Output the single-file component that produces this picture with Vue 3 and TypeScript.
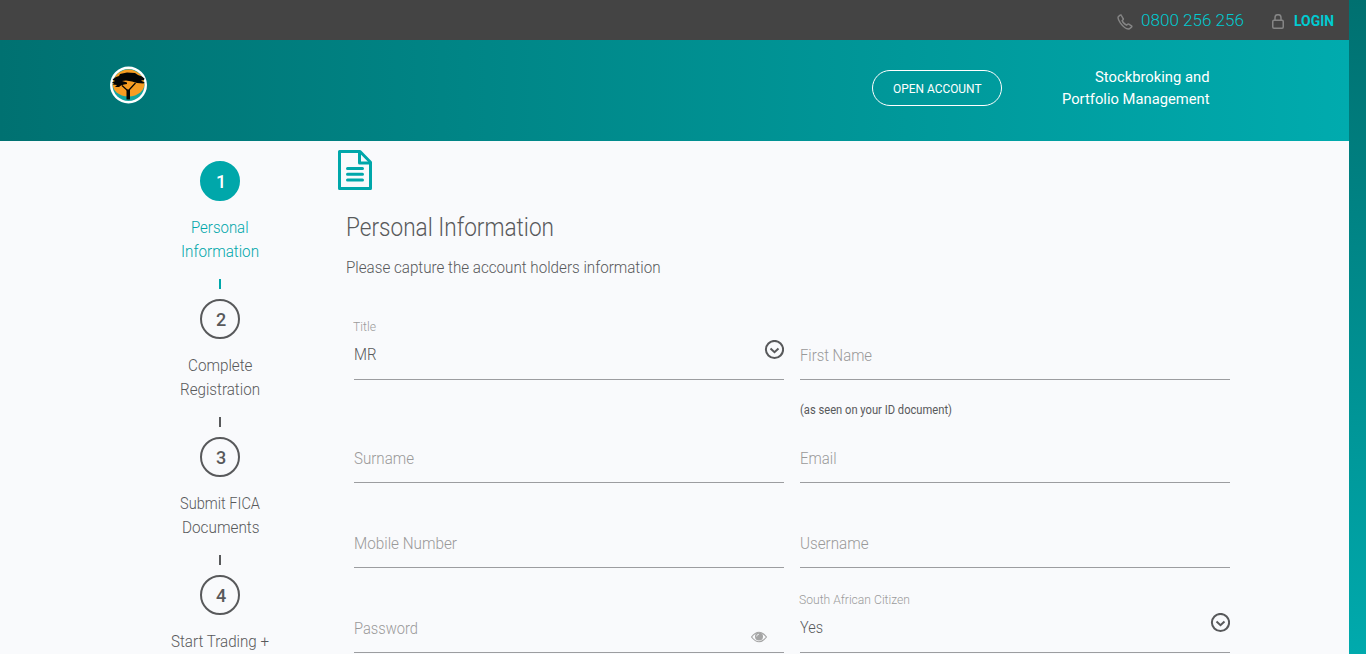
<script setup lang="ts">
import type { Directive } from 'vue'

interface Step {
  id: number
  lines: { text: string; width: number }[]
}

const steps: Step[] = [
  { id: 1, lines: [{ text: 'Personal', width: 57.5 }, { text: 'Information', width: 78 }] },
  { id: 2, lines: [{ text: 'Complete', width: 64.5 }, { text: 'Registration', width: 80 }] },
  { id: 3, lines: [{ text: 'Submit FICA', width: 80 }, { text: 'Documents', width: 77.5 }] },
  { id: 4, lines: [{ text: 'Start Trading +', width: 98 }] },
]

interface Field {
  name: string
  width: number
  value?: string
  valueWidth?: number
  hint?: string
  reveal?: boolean
}

const fields: Field[] = [
  { name: 'Title', width: 23, value: 'MR', valueWidth: 22.5 },
  { name: 'First Name', width: 72, hint: '(as seen on your ID document)' },
  { name: 'Surname', width: 60 },
  { name: 'Email', width: 36.5 },
  { name: 'Mobile Number', width: 103 },
  { name: 'Username', width: 68.5 },
  { name: 'Password', width: 64, reveal: true },
  { name: 'South African Citizen', width: 111, value: 'Yes', valueWidth: 23 },
]

// Condenses a label's glyphs so that it fills the given width in pixels.
const vFit: Directive<HTMLElement, number> = {
  mounted(el, { value }) {
    const natural = el.getBoundingClientRect().width
    el.style.transform = `scaleX(${(value / natural).toFixed(4)})`
    el.style.marginRight = `${(value - natural).toFixed(2)}px`
  },
}
</script>

<template>
  <div class="page">
    <div class="content">
      <div class="topbar">
        <svg class="phone" viewBox="0 0 16 16">
          <path d="M3.2 1.1 1.5 2.5C.6 3.4 1 5.500 3.500 9.100 6.400 13 10.200 15.400 12.400 14.800L14.500 13.200C15 12.700 15 12.300 14.500 11.900L11.800 10.100C11.300 9.800 10.900 9.900 10.500 10.300L9.600 11.100C8.200 10.800 5.700 8.200 5.200 6.700L6 5.800C6.400 5.400 6.400 5 6.100 4.500L4.400 1.500C4.100.9 3.700.8 3.200 1.100Z" />
        </svg>
        <span class="tel"><span v-fit="103">0800 256 256</span></span>
        <svg class="lock" viewBox="0 0 12 15">
          <rect x=".75" y="6.25" width="10.500" height="8" rx="1.200" />
          <path d="M3 6V3.700a3 3 0 0 1 6 0V6" />
        </svg>
        <span class="login"><span v-fit="40">LOGIN</span></span>
      </div>

      <header class="header">
        <svg class="logo" viewBox="0 0 38 38">
          <circle cx="18.500" cy="19" r="18.500" fill="#fff" />
          <circle cx="18.500" cy="19" r="16" fill="#12a3a0" />
          <path d="M2.700 17A16 16 0 0 1 34.300 17C35.500 24 28 30.500 18.500 30.500S1.500 24 2.700 17Z" fill="#f79c22" />
          <path d="M2.500 13.500 6 11 9 10 10 8 17 6.500 25 7 28 9 32 10.500 34.500 12.500 34 14 31 14.500 34.500 16.500 33.500 17.500 27 17 22 15.500 16 14.500 12 15 17 16.500 17 18 14 18.500 11 19.500 9 21 5 21 7 19 2.500 18.500 4 17.500 2 16.500 5 15Z" fill="#050505" />
          <path d="M12 19.500 17.500 24.500M25.500 17 19 24" fill="none" stroke="#050505" stroke-width="1.200" />
          <path d="M16.500 23.500H20V33.500H16.500Z" fill="#050505" />
        </svg>
        <button class="open"><span v-fit="88.5">OPEN ACCOUNT</span></button>
        <div class="tagline">
          <div><span v-fit="114.5">Stockbroking and</span></div>
          <div><span v-fit="147.5">Portfolio Management</span></div>
        </div>
      </header>

      <div class="body">
        <nav class="steps">
          <div v-for="s in steps" :key="s.id" class="step" :class="{ active: s.id === 1 }">
            <div class="num">{{ s.id }}</div>
            <div class="step-label">
              <div v-for="l in s.lines" :key="l.text"><span v-fit="l.width">{{ l.text }}</span></div>
            </div>
            <div class="tick"></div>
          </div>
        </nav>

        <main class="main">
          <svg class="doc" viewBox="0 0 34 40">
            <path d="M1.500 1.500H22L32.500 12.200V38.500H1.500Z" />
            <path d="M21.500 1.500V13H32.500" />
            <path d="M9.500 18.500H24.500M9.500 24.300H24.500M9.500 30.100H24.500" stroke-linecap="round" />
          </svg>
          <h1><span v-fit="208">Personal Information</span></h1>
          <p class="lead"><span v-fit="314.5">Please capture the account holders information</span></p>

          <form class="form" @submit.prevent>
            <div v-for="f in fields" :key="f.name" class="field">
              <div class="control">
                <template v-if="f.value">
                  <div class="caption"><span v-fit="f.width">{{ f.name }}</span></div>
                  <div class="value"><span v-fit="f.valueWidth ?? 0">{{ f.value }}</span></div>
                  <svg class="chevron" viewBox="0 0 20 20">
                    <circle cx="10.500" cy="9.500" r="8.600" />
                    <path d="M6.500 8.500 10.500 12.200 14.500 8.500" />
                  </svg>
                </template>
                <div v-else class="placeholder"><span v-fit="f.width">{{ f.name }}</span></div>
                <svg v-if="f.reveal" class="eye" viewBox="0 0 16 12">
                  <path d="M.5 6Q8-3.500 15.500 6 8 15.500.5 6Z" fill="none" stroke="#a5a5a5" stroke-width="1.200" />
                  <circle cx="8" cy="5.600" r="4" fill="#a5a5a5" />
                  <path d="M5.700 5.500A2.300 2.300 0 0 1 8 3.200" fill="none" stroke="#f9fafc" stroke-width=".8" />
                </svg>
              </div>
              <div v-if="f.hint" class="hint"><span v-fit="152">{{ f.hint }}</span></div>
            </div>
          </form>
        </main>
      </div>
    </div>
    <div class="rail"></div>
  </div>
</template>

<style>
body {
  margin: 0;
  overflow: hidden;
}
</style>

<style scoped>
.page {
  display: flex;
  width: 1366px;
  height: 654px;
  overflow: hidden;
  font-family: Roboto, "Liberation Sans", sans-serif;
  font-weight: 330;
  font-size: 16.500px;
  color: #58595b;
  background: #f9fafc;
}
.content {
  width: 1349px;
}
.rail {
  width: 17px;
  background: linear-gradient(#007070, #00aaad);
}
.page span {
  display: inline-block;
  white-space: nowrap;
  transform-origin: left center;
}
.topbar {
  display: flex;
  align-items: center;
  box-sizing: border-box;
  height: 40px;
  padding-right: 15px;
  justify-content: flex-end;
  background: #444;
  color: #00cbd1;
}
.phone {
  width: 16px;
  height: 16px;
  margin: 3px 8px 0 0;
}
.lock {
  width: 12px;
  height: 15px;
  margin: 3px 10px 0 28px;
}
.phone path,
.lock rect,
.lock path {
  fill: none;
  stroke: #858585;
  stroke-width: 1.500;
}
.tel {
  font-size: 17px;
}
.login {
  padding-top: 1px;
  font-size: 15px;
  font-weight: 700;
}
.header {
  display: flex;
  align-items: flex-start;
  box-sizing: border-box;
  height: 101px;
  padding: 0 140px 0 110px;
  color: #fff;
  background: linear-gradient(90deg, #007171, #00abae);
}
.logo {
  width: 38px;
  height: 38px;
  margin-top: 26px;
}
.open {
  box-sizing: border-box;
  width: 130px;
  height: 36px;
  margin: 30px 0 0 auto;
  padding: 0;
  border: 1px solid #fff;
  border-radius: 18px;
  background: none;
  color: #fff;
  font: 400 13.500px/33px Roboto, sans-serif;
}
.tagline {
  width: 207px;
  padding-top: 26px;
  text-align: right;
  font-size: 15.500px;
  font-weight: 400;
  line-height: 22px;
}
.body {
  display: flex;
}
.steps {
  width: 120px;
  margin-left: 160px;
  padding-top: 20px;
}
.step {
  display: flex;
  flex-direction: column;
  align-items: center;
  height: 138px;
}
.num {
  box-sizing: border-box;
  width: 40px;
  height: 40px;
  padding-left: 2px;
  border: 2px solid #58595b;
  border-radius: 50%;
  text-align: center;
  font-size: 18px;
  font-weight: 500;
  line-height: 38px;
}
.step-label {
  height: 48px;
  margin: 15px 0;
  padding-left: 0.500px;
  text-align: center;
  line-height: 24px;
}
.tick {
  width: 2px;
  height: 10px;
  background: #58595b;
}
.active {
  color: #00a7aa;
}
.active .num {
  color: #fff;
  border-color: #00a7aa;
  background: #00a7aa;
}
.active .tick {
  background: #00a7aa;
}
.main {
  width: 892px;
  margin-left: 58px;
  padding-top: 9px;
}
.doc {
  display: block;
  width: 34px;
  height: 40px;
  fill: none;
  stroke: #00a7aa;
  stroke-width: 3;
  stroke-linejoin: round;
}
h1 {
  margin: 20px 0 0 8px;
  font-size: 25.500px;
  font-weight: 300;
  line-height: 35px;
}
.lead {
  margin: 11px 0 0 7.500px;
  line-height: 24px;
}
.form {
  display: grid;
  grid-template-columns: 430px 430px;
  grid-template-rows: 113px 60px 85px 85px;
  column-gap: 16px;
  margin-left: 16px;
  padding-top: 30px;
}
.field:nth-child(n + 3) .control {
  height: 60px;
}
.control {
  position: relative;
  box-sizing: border-box;
  height: 70px;
  border-bottom: 1px solid #9c9da0;
}
.field {
  display: flex;
  flex-direction: column;
  justify-content: flex-end;
}
.field:nth-child(-n + 2) {
  justify-content: flex-start;
}
.caption {
  position: absolute;
  left: -1px;
  bottom: 42px;
  color: #9b9b9b;
  font-size: 13px;
  line-height: 20px;
}
.value,
.placeholder {
  position: absolute;
  left: 0;
  bottom: 12px;
  line-height: 24px;
}
.placeholder {
  bottom: 11px;
  color: #999;
}
.chevron {
  position: absolute;
  right: 0;
  bottom: 19px;
  width: 20px;
  height: 20px;
  fill: none;
  stroke: #58595b;
  stroke-width: 2;
}
.eye {
  position: absolute;
  right: 17px;
  bottom: 9px;
  width: 16px;
  height: 12px;
}
.hint {
  margin-top: 20px;
  font-size: 12px;
  line-height: 20px;
  font-weight: 400;
}
</style>
